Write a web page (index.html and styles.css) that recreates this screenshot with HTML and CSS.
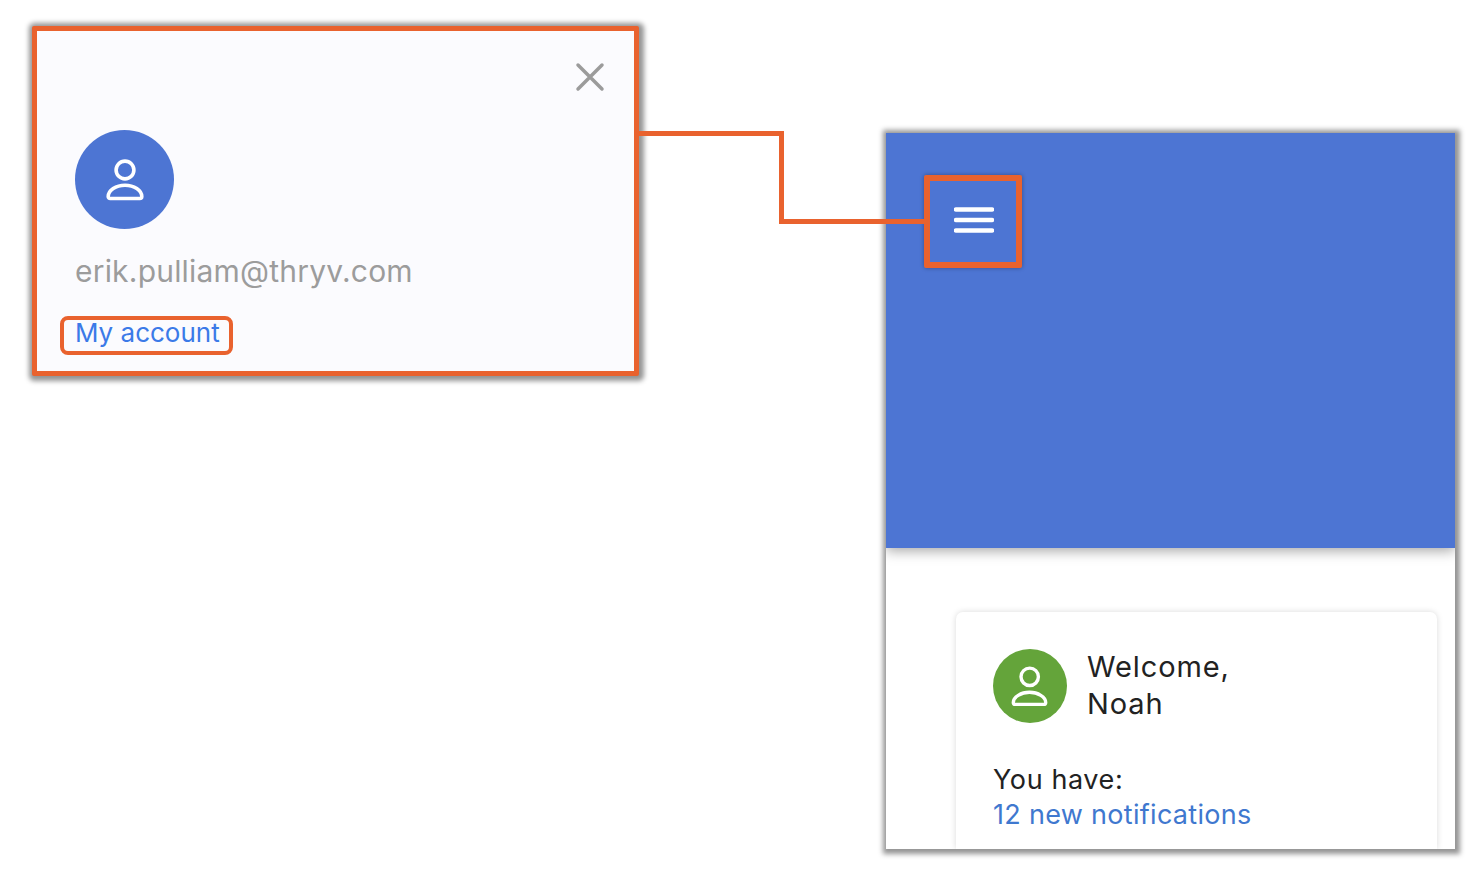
FILE: index.html
```html
<!DOCTYPE html>
<html lang="en">
<head>
<meta charset="utf-8">
<title>Account menu callout</title>
<link rel="stylesheet" href="styles.css">
</head>
<body>
<main class="canvas">
  <svg class="connector" width="300" height="100" viewBox="0 0 300 100" aria-hidden="true">
    <path d="M0 2.5H142.5V90.5H288" />
  </svg>

  <section class="callout account">
    <button class="close" aria-label="Close">
      <svg width="30" height="30" viewBox="0 0 30 30"><path d="M3 3L27 27M27 3L3 27"/></svg>
    </button>
    <div class="avatar avatar-blue">
      <svg class="person" width="38" height="42" viewBox="0 0 38 42"><circle cx="19" cy="11" r="8.9"/><path d="M4.2 39.5H33.8a2 2 0 0 0 2-2C35.8 31 28 26.2 19 26.2S2.2 31 2.2 37.5a2 2 0 0 0 2 2Z"/></svg>
    </div>
    <p class="email">erik.pulliam@thryv.com</p>
    <a class="account-link">My account</a>
  </section>

  <section class="phone">
    <header class="phone-header">
      <button class="menu" aria-label="Menu">
        <svg width="40" height="26" viewBox="0 0 40 26"><path d="M2 2.5H38M2 13H38M2 23.5H38"/></svg>
      </button>
    </header>
    <div class="phone-body">
      <article class="card">
        <div class="welcome">
          <div class="avatar avatar-green">
            <svg class="person" width="38" height="42" viewBox="0 0 38 42"><circle cx="18.7" cy="11.8" r="8.7"/><path d="M4.3 39.4H32.7a2 2 0 0 0 2-2C34.7 32 27 27.3 18.5 27.3S2.3 32 2.3 37.4a2 2 0 0 0 2 2Z"/></svg>
          </div>
          <h2 class="greeting">Welcome,<br>Noah</h2>
        </div>
        <p class="summary">You have:<br><a class="notifications">12 new notifications</a></p>
      </article>
    </div>
  </section>
</main>
</body>
</html>
```
FILE: styles.css
```css
* { box-sizing: border-box; }
html, body { margin: 0; height: 100%; background: #fff; }
body { font-family: Inter, "Noto Sans", sans-serif; overflow: hidden; }
.canvas { position: relative; width: 1474px; height: 872px; }
.callout, .phone { position: absolute; box-shadow: 1px 1px 5px 4px rgba(0,0,0,.42); }
.account {
  left: 32px; top: 26px; width: 607px; height: 350px;
  border: 5px solid #e9622e; border-radius: 2px; background: #fbfbfe;
  padding: 99px 0 0 38px;
  display: flex; flex-direction: column; align-items: flex-start;
}
.connector { position: absolute; left: 639px; top: 131px; z-index: 2; fill: none; stroke: #e9622e; stroke-width: 5; }
.close { position: absolute; right: 29px; top: 31px; padding: 0; border: 0; background: none; display: flex; }
.close path { stroke: #9b9b9b; stroke-width: 3.5; stroke-linecap: round; fill: none; }
.avatar { border-radius: 50%; display: flex; align-items: center; justify-content: center; flex: none; }
.avatar-blue { width: 99px; height: 99px; background: #4d75d3; }
.avatar-green { width: 74px; height: 74px; background: #64a43a; }
.person circle, .person path { fill: none; stroke: #fff; stroke-width: 3.6; stroke-linejoin: round; }
.avatar-green .person circle, .avatar-green .person path { stroke-width: 3.4; }
.email { margin: 24px 0 0; font-size: 30px; line-height: 36px; color: #9c9c9c; letter-spacing: .2px; }
.account-link {
  margin: 27px 0 0 -15px; padding: 0 9px 0 11px; height: 39px; line-height: 26px;
  border: 4.5px solid #e9622e; border-radius: 8px;
  font-size: 26px; color: #3b7ae8;
}
.phone { left: 886px; top: 133px; width: 569px; height: 716px; background: #fff; display: flex; flex-direction: column; overflow: hidden; }
.phone-header { height: 415px; flex: none; background: #4d75d3; padding: 42px 0 0 38px; box-shadow: 0 3px 12px rgba(0,0,0,.35); position: relative; z-index: 1; }
.menu { width: 98px; height: 93px; padding: 0 0 3px 2px; background: none; border: 6px solid #e9622e; border-radius: 2px; display: flex; align-items: center; justify-content: center; box-shadow: 0 0 4px rgba(0,0,0,.35); }
.menu path { stroke: #fff; stroke-width: 4.5; stroke-linecap: round; fill: none; }
.phone-body { flex: 1; padding: 64px 18px 0 70px; }
.card { height: 100%; background: #fff; border-radius: 7px 7px 0 0; box-shadow: 0 0 6px rgba(0,0,0,.15); padding: 37px 37px 0; }
.welcome { display: flex; gap: 20px; align-items: center; }
.greeting { margin: -2px 0 0; font-size: 29px; line-height: 37px; font-weight: 400; letter-spacing: .9px; color: #222; }
.summary { margin: 39px 0 0; font-size: 27px; line-height: 35px; letter-spacing: .6px; color: #222; }
.notifications { letter-spacing: .3px; color: #3f78cf; }
```
